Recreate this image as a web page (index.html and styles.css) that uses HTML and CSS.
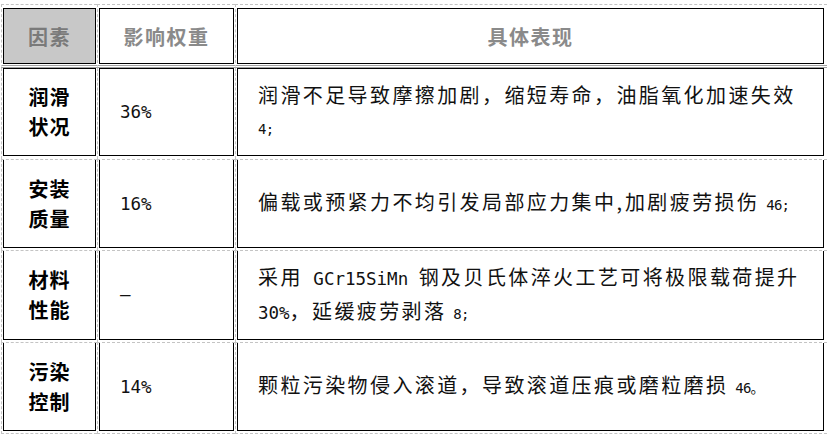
FILE: index.html
```html
<!DOCTYPE html>
<html lang="zh-CN">
<head>
<meta charset="utf-8">
<title>因素表</title>
<link rel="stylesheet" href="styles.css">
</head>
<body>
<div class="table">
  <div class="cell hd"><div class="box th gray">因素</div></div>
  <div class="cell hd"><div class="box th">影响权重</div></div>
  <div class="cell hd c3"><div class="box th">具体表现</div></div>

  <div class="cell r1"><div class="box f">润滑状况</div></div>
  <div class="cell r1"><div class="box v">36%</div></div>
  <div class="cell r1 c3"><div class="box d"><p class="txt">润滑不足导致摩擦加剧，缩短寿命，油脂氧化加速失效 <span class="ref">4;</span></p></div></div>

  <div class="cell rb"><div class="box f">安装质量</div></div>
  <div class="cell rb"><div class="box v">16%</div></div>
  <div class="cell rb c3"><div class="box d"><p class="txt">偏载或预紧力不均引发局部应力集中<span class="cm">,</span>加剧疲劳损伤 <span class="ref">46;</span></p></div></div>

  <div class="cell rb"><div class="box f">材料性能</div></div>
  <div class="cell rb"><div class="box v">–</div></div>
  <div class="cell rb c3"><div class="box d"><p class="txt">采用<span class="m"> GCr15SiMn </span>钢及贝氏体淬火工艺可将极限载荷提升<span class="m">30%</span>，延缓疲劳剥落 <span class="ref">8;</span></p></div></div>

  <div class="cell rb end"><div class="box f">污染控制</div></div>
  <div class="cell rb end"><div class="box v">14%</div></div>
  <div class="cell rb end c3"><div class="box d"><p class="txt">颗粒污染物侵入滚道，导致滚道压痕或磨粒磨损 <span class="ref">46。</span></p></div></div>
</div>
</body>
</html>
```
FILE: styles.css
```css
html, body {
  margin: 0;
  padding: 0;
  background: #ffffff;
}

body {
  font-family: "Noto Sans CJK SC", sans-serif;
  color: #111111;
}

.table {
  display: grid;
  grid-template-columns: 96px 138px 592px;
  grid-template-rows: 64px 91px 91px 92px 92px;
  width: 826px;
  margin: 4px 0 0 1px;
}

.cell {
  display: flex;
  box-sizing: border-box;
  border-left: 1px dashed #c4c4c4;
  padding: 0 1px 2px 1px;
}

.cell.c3 {
  padding-right: 3px;
}

.cell.hd {
  border-top: 1px dashed #c4c4c4;
  border-bottom: 3px double #a2a2a2;
  padding-top: 3px;
  padding-bottom: 1px;
}

.cell.r1 {
  padding-bottom: 3px;
}

.cell.rb {
  border-top: 1px dashed #c4c4c4;
}

.cell.end {
  border-bottom: 1px dashed #c4c4c4;
}

.box {
  flex: 1;
  box-sizing: border-box;
  border: 1px solid #000000;
  display: flex;
  align-items: center;
  min-width: 0;
}

.cell.rb .box {
  border-top: none;
}

.th {
  justify-content: center;
  color: #8a8a8a;
  font-weight: 700;
  font-size: 20px;
  letter-spacing: 1.5px;
}

.th.gray {
  background: #c8c8c8;
  color: #7a7a7a;
}

.f {
  justify-content: center;
  text-align: center;
  padding: 0 16px;
  font-weight: 700;
  font-size: 20px;
  line-height: 30px;
  letter-spacing: 1px;
  color: #000000;
}

.v {
  padding-left: 20px;
  font-family: "DejaVu Sans Mono", monospace;
  font-size: 17.5px;
  color: #111111;
}

.d {
  padding: 0 20px;
}

.txt {
  margin: 0;
  width: 100%;
  font-size: 20px;
  line-height: 31px;
  letter-spacing: 2.4px;
  color: #111111;
}

.cm {
  letter-spacing: 0;
  margin-right: 3px;
}

.m {
  font-family: "DejaVu Sans Mono", monospace;
  font-size: 17.5px;
  letter-spacing: 0;
}

.ref {
  font-family: "DejaVu Sans Mono", "Noto Sans CJK SC", monospace;
  font-size: 14px;
  letter-spacing: -0.8px;
}
```
